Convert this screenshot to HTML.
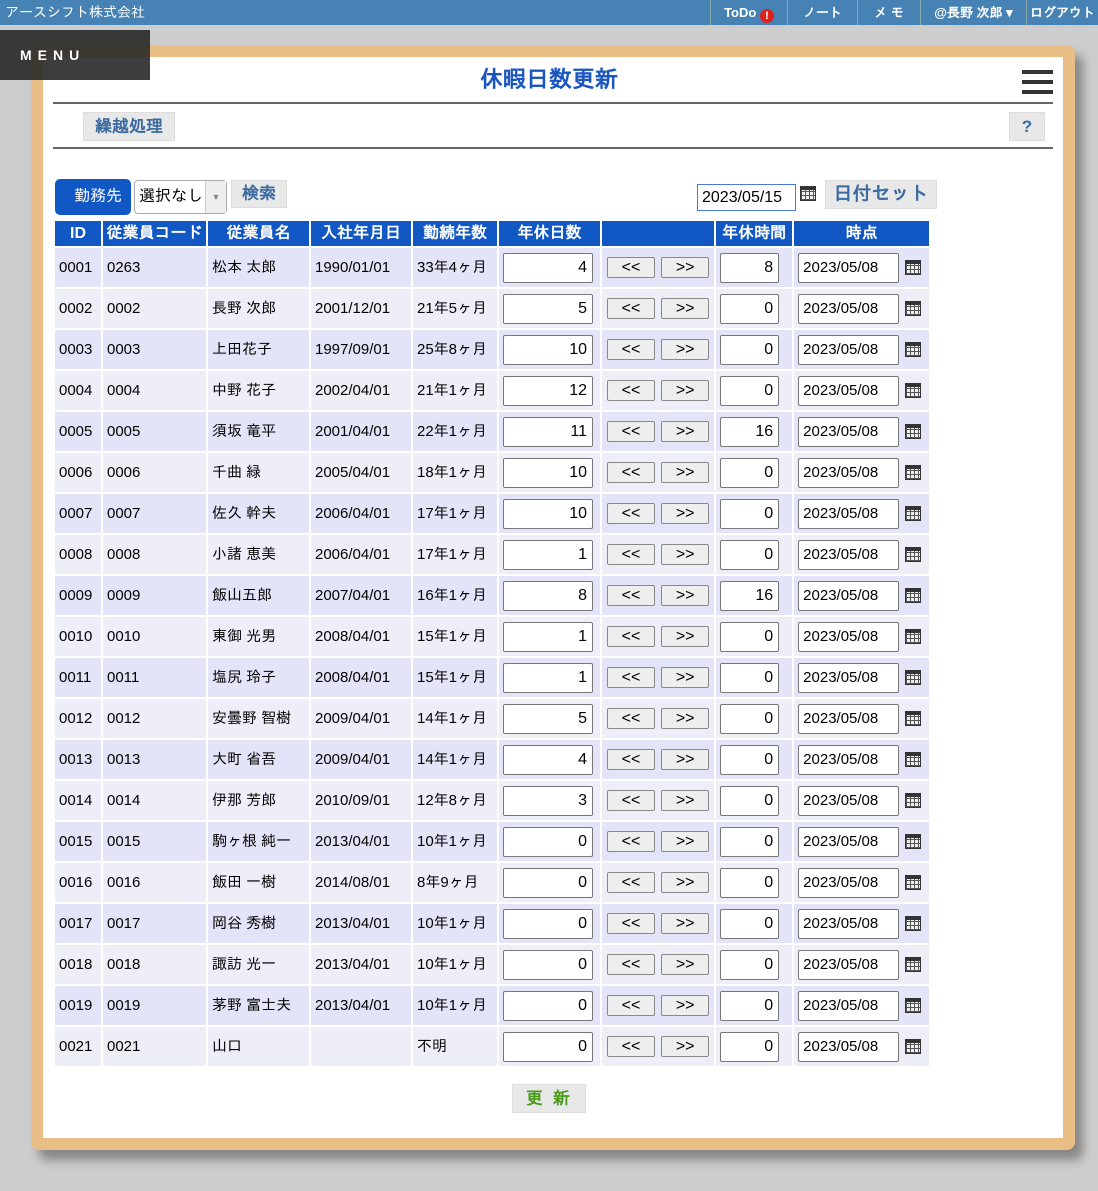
<!DOCTYPE html>
<html><head><meta charset="utf-8"><style>
*{box-sizing:border-box}
body{margin:0;width:1098px;height:1191px;overflow:hidden;background:#cdcdcd;font-family:"Liberation Sans","IPAGothic","Noto Sans CJK JP",sans-serif;position:relative}
.top{position:absolute;left:0;top:0;width:1098px;height:25px;background:#4682b4;color:#fff;font-size:14px}
.top .l{position:absolute;left:5px;top:4px}
.top .it{position:absolute;top:0;height:25px;line-height:25px;border-left:1px solid #8aa;text-align:center;font-weight:bold;font-size:13px}
.menu{position:absolute;left:0;top:30px;width:150px;height:50px;background:rgba(40,40,40,.9);color:#fff;font-weight:bold;letter-spacing:6px;font-size:14px;padding:17px 0 0 20px;z-index:3}
.card{position:absolute;left:31px;top:45px;width:1044px;height:1105px;background:#e8be84;border-radius:8px;box-shadow:8px 10px 10px rgba(0,0,0,.35)}
.in{position:absolute;left:43px;top:57px;width:1020px;height:1081px;background:#fff}
.title{position:absolute;left:0;top:66px;width:1098px;text-align:center;color:#1a55c0;font-size:23px;font-weight:bold}
.hr{position:absolute;left:53px;width:1000px;height:2px;background:#666}
.btn{position:absolute;background:#e8e8e8;border:1px solid #ddd;color:#3a6aa0;font-weight:bold;font-size:17px;text-align:center}
table{position:absolute;left:53px;top:218px;border-collapse:separate;border-spacing:2px;font-size:15px}
th{background:#1258c4;color:#fff;height:25px;font-size:16px;padding:0}
td{height:39px;padding:0 4px;white-space:nowrap}
tr.o td{background:#e4e4f8} tr.e td{background:#eeeef8}
.n{display:inline-block;border:1px solid #777;border-radius:2px;background:#fff;height:30px;line-height:28px;text-align:right;padding-right:5px;font-size:16px}
.ar{display:inline-block;width:48px;height:21px;border:1px solid #888;border-radius:2px;background:#eee;text-align:center;line-height:19px;font-size:16px;margin:0 1px}
.d{display:inline-block;width:101px;height:30px;border:1px solid #777;border-radius:2px;line-height:28px;padding-left:4px;background:#fff;font-size:15px}
.cal{display:inline-block;width:16px;height:15px;margin-left:6px;vertical-align:-3px;background:repeating-linear-gradient(90deg,#555 0 1px,transparent 1px 4px),repeating-linear-gradient(0deg,#555 0 1px,#eee 1px 4px);border:1px solid #333;border-top:4px solid #333}
</style></head><body>
<div class="top"><span class="l">アースシフト株式会社</span>
<div class="it" style="left:710px;width:77px">ToDo <span style="display:inline-block;width:14px;height:14px;border-radius:50%;background:#d22;font-size:11px;line-height:14px;vertical-align:-2px">!</span></div>
<div class="it" style="left:787px;width:70px">ノート</div>
<div class="it" style="left:857px;width:63px">メ モ</div>
<div class="it" style="left:920px;width:106px">@長野 次郎 ▾</div>
<div class="it" style="left:1026px;width:72px">ログアウト</div></div>
<div class="menu">MENU</div>
<div class="card"></div><div class="in"></div>
<div class="title">休暇日数更新</div>
<div style="position:absolute;left:1022px;top:70px;width:31px;height:24px;border-top:4px solid #333;border-bottom:4px solid #333"><div style="margin-top:6px;height:4px;background:#333"></div></div>
<div class="hr" style="top:102px"></div>
<div class="btn" style="left:83px;top:112px;width:92px;height:29px;line-height:27px">繰越処理</div>
<div class="btn" style="left:1009px;top:112px;width:36px;height:29px;line-height:27px">?</div>
<div class="hr" style="top:147px"></div>
<div style="position:absolute;left:55px;top:179px;width:76px;height:36px;background:#1258c4;border-radius:5px;color:#fff;font-size:16px;line-height:36px;padding-left:19px">勤務先</div>
<div style="position:absolute;left:134px;top:180px;width:93px;height:34px;border:1px solid #aaa;border-radius:4px;background:#fff;font-size:16px;line-height:32px;padding-left:4px">選択なし<span style="position:absolute;right:0;top:0;width:21px;height:32px;border-left:1px solid #ccc;background:#eee;color:#888;font-size:9px;text-align:center">▼</span></div>
<div class="btn" style="left:231px;top:180px;width:56px;height:28px;line-height:26px">検索</div>
<div style="position:absolute;left:697px;top:184px;width:99px;height:27px;border:1px solid #4a78d8;font-size:16px;line-height:25px;padding-left:4px">2023/05/15</div>
<span class="cal" style="position:absolute;left:794px;top:186px"></span>
<div class="btn" style="left:825px;top:180px;width:112px;height:29px;line-height:27px;font-size:19px">日付セット</div>
<table style="top:219px">
<tr><th style="width:46px">ID</th><th style="width:103px">従業員コード</th><th style="width:101px">従業員名</th><th style="width:100px">入社年月日</th><th style="width:84px">勤続年数</th><th style="width:101px">年休日数</th><th style="width:111px"></th><th style="width:76px">年休時間</th><th style="width:135px">時点</th></tr>
<tr class="o"><td>0001</td><td>0263</td><td>松本 太郎</td><td>1990/01/01</td><td>33年4ヶ月</td><td><span class="n" style="width:90px">4</span></td><td><span class="ar">&lt;&lt;</span> <span class="ar">&gt;&gt;</span></td><td><span class="n" style="width:59px">8</span></td><td><span class="d">2023/05/08</span><span class="cal"></span></td></tr>
<tr class="e"><td>0002</td><td>0002</td><td>長野 次郎</td><td>2001/12/01</td><td>21年5ヶ月</td><td><span class="n" style="width:90px">5</span></td><td><span class="ar">&lt;&lt;</span> <span class="ar">&gt;&gt;</span></td><td><span class="n" style="width:59px">0</span></td><td><span class="d">2023/05/08</span><span class="cal"></span></td></tr>
<tr class="o"><td>0003</td><td>0003</td><td>上田花子</td><td>1997/09/01</td><td>25年8ヶ月</td><td><span class="n" style="width:90px">10</span></td><td><span class="ar">&lt;&lt;</span> <span class="ar">&gt;&gt;</span></td><td><span class="n" style="width:59px">0</span></td><td><span class="d">2023/05/08</span><span class="cal"></span></td></tr>
<tr class="e"><td>0004</td><td>0004</td><td>中野 花子</td><td>2002/04/01</td><td>21年1ヶ月</td><td><span class="n" style="width:90px">12</span></td><td><span class="ar">&lt;&lt;</span> <span class="ar">&gt;&gt;</span></td><td><span class="n" style="width:59px">0</span></td><td><span class="d">2023/05/08</span><span class="cal"></span></td></tr>
<tr class="o"><td>0005</td><td>0005</td><td>須坂 竜平</td><td>2001/04/01</td><td>22年1ヶ月</td><td><span class="n" style="width:90px">11</span></td><td><span class="ar">&lt;&lt;</span> <span class="ar">&gt;&gt;</span></td><td><span class="n" style="width:59px">16</span></td><td><span class="d">2023/05/08</span><span class="cal"></span></td></tr>
<tr class="e"><td>0006</td><td>0006</td><td>千曲 緑</td><td>2005/04/01</td><td>18年1ヶ月</td><td><span class="n" style="width:90px">10</span></td><td><span class="ar">&lt;&lt;</span> <span class="ar">&gt;&gt;</span></td><td><span class="n" style="width:59px">0</span></td><td><span class="d">2023/05/08</span><span class="cal"></span></td></tr>
<tr class="o"><td>0007</td><td>0007</td><td>佐久 幹夫</td><td>2006/04/01</td><td>17年1ヶ月</td><td><span class="n" style="width:90px">10</span></td><td><span class="ar">&lt;&lt;</span> <span class="ar">&gt;&gt;</span></td><td><span class="n" style="width:59px">0</span></td><td><span class="d">2023/05/08</span><span class="cal"></span></td></tr>
<tr class="e"><td>0008</td><td>0008</td><td>小諸 恵美</td><td>2006/04/01</td><td>17年1ヶ月</td><td><span class="n" style="width:90px">1</span></td><td><span class="ar">&lt;&lt;</span> <span class="ar">&gt;&gt;</span></td><td><span class="n" style="width:59px">0</span></td><td><span class="d">2023/05/08</span><span class="cal"></span></td></tr>
<tr class="o"><td>0009</td><td>0009</td><td>飯山五郎</td><td>2007/04/01</td><td>16年1ヶ月</td><td><span class="n" style="width:90px">8</span></td><td><span class="ar">&lt;&lt;</span> <span class="ar">&gt;&gt;</span></td><td><span class="n" style="width:59px">16</span></td><td><span class="d">2023/05/08</span><span class="cal"></span></td></tr>
<tr class="e"><td>0010</td><td>0010</td><td>東御 光男</td><td>2008/04/01</td><td>15年1ヶ月</td><td><span class="n" style="width:90px">1</span></td><td><span class="ar">&lt;&lt;</span> <span class="ar">&gt;&gt;</span></td><td><span class="n" style="width:59px">0</span></td><td><span class="d">2023/05/08</span><span class="cal"></span></td></tr>
<tr class="o"><td>0011</td><td>0011</td><td>塩尻 玲子</td><td>2008/04/01</td><td>15年1ヶ月</td><td><span class="n" style="width:90px">1</span></td><td><span class="ar">&lt;&lt;</span> <span class="ar">&gt;&gt;</span></td><td><span class="n" style="width:59px">0</span></td><td><span class="d">2023/05/08</span><span class="cal"></span></td></tr>
<tr class="e"><td>0012</td><td>0012</td><td>安曇野 智樹</td><td>2009/04/01</td><td>14年1ヶ月</td><td><span class="n" style="width:90px">5</span></td><td><span class="ar">&lt;&lt;</span> <span class="ar">&gt;&gt;</span></td><td><span class="n" style="width:59px">0</span></td><td><span class="d">2023/05/08</span><span class="cal"></span></td></tr>
<tr class="o"><td>0013</td><td>0013</td><td>大町 省吾</td><td>2009/04/01</td><td>14年1ヶ月</td><td><span class="n" style="width:90px">4</span></td><td><span class="ar">&lt;&lt;</span> <span class="ar">&gt;&gt;</span></td><td><span class="n" style="width:59px">0</span></td><td><span class="d">2023/05/08</span><span class="cal"></span></td></tr>
<tr class="e"><td>0014</td><td>0014</td><td>伊那 芳郎</td><td>2010/09/01</td><td>12年8ヶ月</td><td><span class="n" style="width:90px">3</span></td><td><span class="ar">&lt;&lt;</span> <span class="ar">&gt;&gt;</span></td><td><span class="n" style="width:59px">0</span></td><td><span class="d">2023/05/08</span><span class="cal"></span></td></tr>
<tr class="o"><td>0015</td><td>0015</td><td>駒ヶ根 純一</td><td>2013/04/01</td><td>10年1ヶ月</td><td><span class="n" style="width:90px">0</span></td><td><span class="ar">&lt;&lt;</span> <span class="ar">&gt;&gt;</span></td><td><span class="n" style="width:59px">0</span></td><td><span class="d">2023/05/08</span><span class="cal"></span></td></tr>
<tr class="e"><td>0016</td><td>0016</td><td>飯田 一樹</td><td>2014/08/01</td><td>8年9ヶ月</td><td><span class="n" style="width:90px">0</span></td><td><span class="ar">&lt;&lt;</span> <span class="ar">&gt;&gt;</span></td><td><span class="n" style="width:59px">0</span></td><td><span class="d">2023/05/08</span><span class="cal"></span></td></tr>
<tr class="o"><td>0017</td><td>0017</td><td>岡谷 秀樹</td><td>2013/04/01</td><td>10年1ヶ月</td><td><span class="n" style="width:90px">0</span></td><td><span class="ar">&lt;&lt;</span> <span class="ar">&gt;&gt;</span></td><td><span class="n" style="width:59px">0</span></td><td><span class="d">2023/05/08</span><span class="cal"></span></td></tr>
<tr class="e"><td>0018</td><td>0018</td><td>諏訪 光一</td><td>2013/04/01</td><td>10年1ヶ月</td><td><span class="n" style="width:90px">0</span></td><td><span class="ar">&lt;&lt;</span> <span class="ar">&gt;&gt;</span></td><td><span class="n" style="width:59px">0</span></td><td><span class="d">2023/05/08</span><span class="cal"></span></td></tr>
<tr class="o"><td>0019</td><td>0019</td><td>茅野 富士夫</td><td>2013/04/01</td><td>10年1ヶ月</td><td><span class="n" style="width:90px">0</span></td><td><span class="ar">&lt;&lt;</span> <span class="ar">&gt;&gt;</span></td><td><span class="n" style="width:59px">0</span></td><td><span class="d">2023/05/08</span><span class="cal"></span></td></tr>
<tr class="e"><td>0021</td><td>0021</td><td>山口</td><td></td><td>不明</td><td><span class="n" style="width:90px">0</span></td><td><span class="ar">&lt;&lt;</span> <span class="ar">&gt;&gt;</span></td><td><span class="n" style="width:59px">0</span></td><td><span class="d">2023/05/08</span><span class="cal"></span></td></tr>
</table>
<div class="btn" style="left:512px;top:1084px;width:74px;height:29px;line-height:27px;color:#4a9a1a;letter-spacing:10px;padding-left:8px">更新</div>
</body></html>
